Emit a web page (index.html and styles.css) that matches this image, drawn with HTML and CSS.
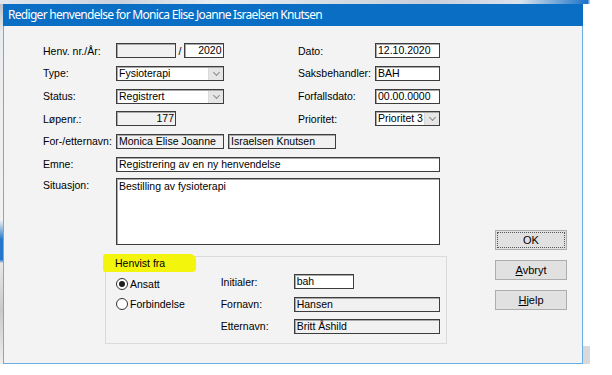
FILE: index.html
```html
<!DOCTYPE html>
<html lang="no">
<head>
    <meta charset="UTF-8">
    <title>Rediger henvendelse</title>
    <link rel="stylesheet" href="styles.css">
</head>
<body>
    <!-- vinduet bak dialogen -->
    <div class="behind-top"></div>
    <div class="desk">
        <div class="behind-left"></div>
        <div class="dialog">
            <div class="titlebar">Rediger henvendelse for Monica Elise Joanne Israelsen Knutsen</div>
            <div class="content">
                <div class="form">
                    <div class="grid">
                        <span class="lbl">Henv. nr./År:</span>
                        <div class="cell">
                            <span class="field grey w60"></span><span class="slash">/</span><span class="field right w40">2020</span>
                        </div>
                        <span class="lbl">Dato:</span>
                        <span class="field">12.10.2020</span>

                        <span class="lbl">Type:</span>
                        <div class="cell"><span class="field select w108">Fysioterapi<i class="arrow"></i></span></div>
                        <span class="lbl">Saksbehandler:</span>
                        <span class="field">BAH</span>

                        <span class="lbl">Status:</span>
                        <div class="cell"><span class="field select w108">Registrert<i class="arrow"></i></span></div>
                        <span class="lbl">Forfallsdato:</span>
                        <span class="field">00.00.0000</span>

                        <span class="lbl">Løpenr.:</span>
                        <div class="cell"><span class="field grey right w60">177</span></div>
                        <span class="lbl">Prioritet:</span>
                        <span class="field select">Prioritet 3<i class="arrow"></i></span>

                        <span class="lbl">For-/etternavn:</span>
                        <div class="cell span3">
                            <span class="field grey w108">Monica Elise Joanne</span>
                            <span class="field grey w108 gap">Israelsen Knutsen</span>
                        </div>

                        <span class="lbl">Emne:</span>
                        <span class="field span3">Registrering av en ny henvendelse</span>

                        <span class="lbl top">Situasjon:</span>
                        <div class="field area span3">Bestilling av fysioterapi</div>
                    </div>

                    <div class="group">
                        <span class="group-title">Henvist fra</span>
                        <div class="group-body">
                            <div class="radios">
                                <div class="radio"><span class="dot checked"></span>Ansatt</div>
                                <div class="radio"><span class="dot"></span>Forbindelse</div>
                            </div>
                            <div class="person">
                                <div class="prow"><span class="plbl">Initialer:</span><span class="field w60">bah</span></div>
                                <div class="prow"><span class="plbl">Fornavn:</span><span class="field grey w146">Hansen</span></div>
                                <div class="prow"><span class="plbl">Etternavn:</span><span class="field grey w146">Britt Åshild</span></div>
                            </div>
                        </div>
                    </div>
                </div>

                <div class="buttons">
                    <button class="btn focus">OK</button>
                    <button class="btn"><u>A</u>vbryt</button>
                    <button class="btn"><u>H</u>jelp</button>
                </div>
            </div>
        </div>
        <div class="behind-right"></div>
    </div>
</body>
</html>
```

FILE: styles.css
```css
* {
    box-sizing: border-box;
}
body {
    margin: 0;
    width: 612px;
    height: 375px;
    overflow: hidden;
    background: #fff;
    font-family: "Liberation Sans", Arial, sans-serif;
    font-size: 10.5px;
    color: #000;
}
/* biter av vinduet bak */
.behind-top {
    height: 4px;
    background: linear-gradient(90deg, #dfe6ee 0, #c9d2dc 20%, #e9eef3 35%, #d8dee6 52%, #c7d0d9 70%, #dbe4ec 85%, #1a74c8 96%, #fff 96.5%);
}
.desk {
    display: flex;
}
.behind-left {
    width: 3px;
    height: 360px;
    background: linear-gradient(180deg, #b9c1cb 0, #e9ecef 8%, #f2f2f2 60%, #2376c9 65.5%, #2376c9 71%, #e8e8e8 72%, #c9c9c9 85%, #eee 100%);
}
.behind-right {
    width: 7px;
    height: 360px;
    background: linear-gradient(180deg, #fff 0, #fff 95%, #d9d9d9 95%);
}
.dialog {
    width: 580px;
    height: 360px;
    border: 1px solid #6aaee6;
    border-top: 0;
    background: #f3f3f3;
}
.titlebar {
    height: 22px;
    margin: 0 -1px;
    padding-left: 5px;
    background: #0a6fc4;
    color: #fff;
    font-family: "Noto Sans", "Open Sans", sans-serif;
    font-size: 12px;
    line-height: 22px;
    letter-spacing: -0.7px;
    white-space: nowrap;
    overflow: hidden;
}
.content {
    display: flex;
    padding: 13.5px 0 0 39px;
}
.form {
    width: 404px;
}
.grid {
    display: grid;
    grid-template-columns: 73px 182px 77px 65px;
    grid-template-rows: repeat(6, 22.67px) auto;
    align-items: center;
}
.lbl {
    white-space: nowrap;
}
.lbl.top {
    align-self: start;
    margin-top: 3px;
    line-height: 15px;
}
.cell {
    display: flex;
    align-items: center;
}
.span3 {
    grid-column: span 3;
}
.field {
    position: relative;
    display: block;
    height: 15px;
    padding: 0 2px;
    border: 1px solid #3d3d3d;
    box-shadow: inset 1px 1px 0 #a9a9a9;
    background: #fff;
    line-height: 13px;
    white-space: nowrap;
    overflow: hidden;
}
.field.grey {
    background: #f1f1f1;
}
.field.right {
    text-align: right;
    padding-right: 1px;
}
.w40 { width: 39.5px; }
.w60 { width: 60px; }
.w108 { width: 107.5px; }
.w146 { width: 146px; }
.gap {
    margin-left: 4.5px;
}
.slash {
    width: 8px;
    text-align: center;
}
.field.area {
    align-self: start;
    margin-top: 2.8px;
    height: 67px;
    padding-top: 1px;
}
.field.select {
    padding-right: 16px;
}
.arrow {
    position: absolute;
    top: 1px;
    right: 0;
    width: 15px;
    height: 12px;
    border-left: 1px solid #dadada;
    background: #e6e6e6;
}
.arrow::after {
    content: "";
    position: absolute;
    left: 5px;
    top: 2px;
    width: 4px;
    height: 4px;
    border-right: 1px solid #8a8a8a;
    border-bottom: 1px solid #8a8a8a;
    transform: rotate(45deg);
}
/* Henvist fra */
.group {
    width: 342px;
    margin: 10.7px 0 0 62px;
    border: 1px solid #dadada;
    padding-bottom: 5px;
}
.group-title {
    display: inline-block;
    height: 18px;
    margin: -10px 0 -3px -3px;
    padding: 0 31px 0 12px;
    background: #f4f50c;
    border-radius: 3px 6px 4px 2px;
    line-height: 18px;
}
.group-body {
    display: flex;
}
.radios {
    width: 114.7px;
    padding: 4.7px 0 0 10px;
}
.radio {
    display: flex;
    align-items: center;
    height: 20px;
    gap: 2px;
}
.dot {
    width: 12px;
    height: 12px;
    border: 1px solid #333;
    border-radius: 50%;
    background: #fff;
    display: flex;
    align-items: center;
    justify-content: center;
}
.dot.checked::after {
    content: "";
    width: 6px;
    height: 6px;
    border-radius: 50%;
    background: #1e1e1e;
}
.person {
    padding-top: 1.6px;
}
.prow {
    display: flex;
    align-items: center;
    height: 22.4px;
}
.plbl {
    width: 73px;
}
/* knapper */
.buttons {
    display: flex;
    flex-direction: column;
    gap: 10px;
    margin: 190.5px 0 0 48px;
}
.btn {
    width: 72px;
    height: 20px;
    padding: 0;
    border: 1px solid #adadad;
    background: #e1e1e1;
    font-family: "Liberation Sans", Arial, sans-serif;
    font-size: 11px;
    color: #000;
}
.btn.focus {
    outline: 1px dotted #555;
    outline-offset: -3px;
}
```
